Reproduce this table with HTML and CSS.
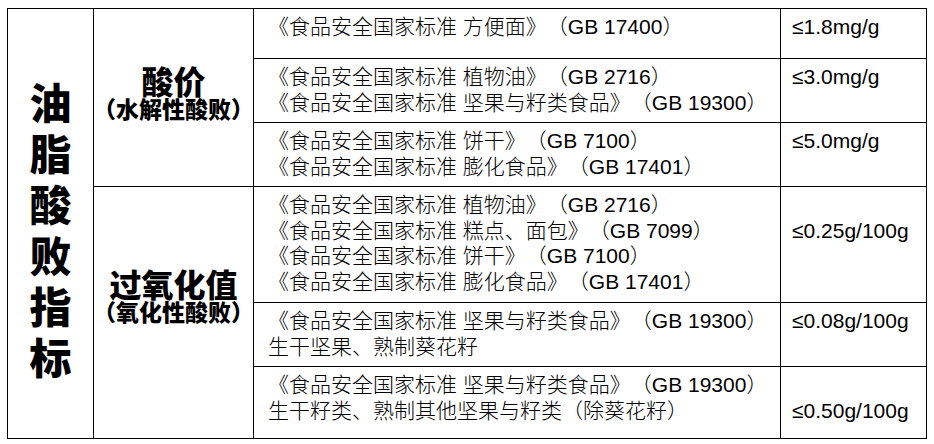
FILE: index.html
```html
<!DOCTYPE html>
<html lang="zh">
<head>
<meta charset="utf-8">
<title>油脂酸败指标</title>
<link rel="stylesheet" href="styles.css">
</head>
<body>
<div class="sheet">
  <div class="cell title"><div class="title-text">油脂酸败指标</div></div>
  <div class="cell group group-acid">
    <div class="group-name">酸价</div>
    <div class="group-sub"><span class="pl">（</span>水解性酸败<span class="pr">）</span></div>
  </div>
  <div class="cell group group-perox">
    <div class="group-name">过氧化值</div>
    <div class="group-sub"><span class="pl">（</span>氧化性酸败<span class="pr">）</span></div>
  </div>

  <div class="cell std">《食品安全国家标准 方便面》（GB 17400）</div>
  <div class="cell val">≤1.8mg/g</div>

  <div class="cell std">《食品安全国家标准 植物油》（GB 2716）<br>《食品安全国家标准 坚果与籽类食品》（GB 19300）</div>
  <div class="cell val">≤3.0mg/g</div>

  <div class="cell std">《食品安全国家标准 饼干》（GB 7100）<br>《食品安全国家标准 膨化食品》（GB 17401）</div>
  <div class="cell val">≤5.0mg/g</div>

  <div class="cell std">《食品安全国家标准 植物油》（GB 2716）<br>《食品安全国家标准 糕点、面包》（GB 7099）<br>《食品安全国家标准 饼干》（GB 7100）<br>《食品安全国家标准 膨化食品》（GB 17401）</div>
  <div class="cell val val-low">≤0.25g/100g</div>

  <div class="cell std">《食品安全国家标准 坚果与籽类食品》（GB 19300）<br>生干坚果、熟制葵花籽</div>
  <div class="cell val">≤0.08g/100g</div>

  <div class="cell std">《食品安全国家标准 坚果与籽类食品》（GB 19300）<br>生干籽类、熟制其他坚果与籽类（除葵花籽）</div>
  <div class="cell val val-low">≤0.50g/100g</div>
</div>
</body>
</html>
```

FILE: styles.css
```css
html, body {
  margin: 0;
  padding: 0;
  background: #ffffff;
}

.sheet {
  margin: 8px 0 0 7px;
  display: grid;
  grid-template-columns: 86px 160px 527px 146px;
  grid-template-rows: 50px 64px 64px 116px 64px 72px;
  width: max-content;
  border-top: 1px solid #000;
  border-left: 1px solid #000;
  color: #000;
  text-spacing-trim: space-all;
}

.cell {
  border-right: 1px solid #000;
  border-bottom: 1px solid #000;
  box-sizing: border-box;
  min-width: 0;
}

.title {
  grid-column: 1;
  grid-row: 1 / 7;
  display: flex;
  align-items: center;
  justify-content: center;
  padding-top: 8px;
}

.title-text {
  width: 1em;
  font-family: "Noto Sans CJK SC", sans-serif;
  font-weight: 900;
  font-size: 42px;
  line-height: 51px;
  text-align: center;
}

.group {
  grid-column: 2;
  display: flex;
  flex-direction: column;
  align-items: center;
  justify-content: center;
  font-family: "Noto Sans CJK SC", sans-serif;
  font-weight: 900;
  text-align: center;
}

.group-acid {
  grid-row: 1 / 4;
  padding-bottom: 11px;
}

.group-perox {
  grid-row: 4 / 7;
  padding-bottom: 35px;
}

.group-name {
  font-size: 32px;
  line-height: 32px;
}

.group-sub {
  font-size: 23px;
  line-height: 24px;
  white-space: nowrap;
}

.pl {
  margin-left: -0.45em;
}

.pr {
  margin-right: -0.45em;
}

.std {
  grid-column: 3;
  padding: 5px 0 0 14px;
  font-family: "Liberation Sans", "Noto Sans CJK SC", sans-serif;
  font-weight: 300;
  font-size: 21px;
  line-height: 25.5px;
  white-space: nowrap;
}

.val {
  grid-column: 4;
  padding: 5px 0 0 11px;
  font-family: "Liberation Sans", "Noto Sans CJK SC", sans-serif;
  font-size: 21px;
  line-height: 25.5px;
  white-space: nowrap;
}

.val-low {
  padding-top: 30.5px;
}
```
